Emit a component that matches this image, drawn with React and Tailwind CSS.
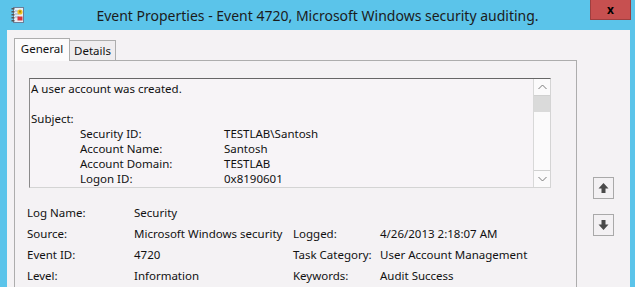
import React from "react";

const font = { fontFamily: '"Noto Sans", "Liberation Sans", sans-serif' };

function EventIcon() {
    return (
        <svg width="14" height="16" viewBox="0 0 14 16">
            <rect x="2.5" y="0.5" width="10" height="15" fill="#e8eef6" stroke="#6b7f99" />
            <line x1="4" y1="4" x2="8" y2="4" stroke="#9aabc2" />
            <line x1="4" y1="7" x2="8" y2="7" stroke="#9aabc2" />
            <line x1="4" y1="10" x2="8" y2="10" stroke="#9aabc2" />
            {[2, 5, 8, 11, 14].map((y) => (
                <rect key={y} x="0.5" y={y - 1} width="3" height="1.5" fill="#555" />
            ))}
            <circle cx="9" cy="5" r="2.6" fill="#f2c01e" />
            <rect x="8.5" y="3.6" width="1" height="2" fill="#6a4a00" />
            <rect x="6.5" y="9.5" width="5" height="4" fill="#d8343b" />
        </svg>
    );
}

function ArrowButton({ down }) {
    return (
        <div className="flex h-[22px] w-[21px] items-center justify-center border border-[#a9a9a9] bg-[#f3f1f3]">
            <svg width="11" height="12" viewBox="0 0 11 12" className={down ? "rotate-180" : ""}>
                <path d="M5.5 1 L10.5 6.5 L7.5 6.5 L7.5 11 L3.5 11 L3.5 6.5 L0.5 6.5 Z" fill="#4a4a4a" />
            </svg>
        </div>
    );
}

function Chevron({ down }) {
    return (
        <svg width="9" height="6" viewBox="0 0 9 6" className={down ? "rotate-180" : ""}>
            <path d="M0.5 5 L4.5 1 L8.5 5" fill="none" stroke="#7a7a7a" strokeWidth="1" />
        </svg>
    );
}

const subjectRows = [
    ["Security ID:", "TESTLAB\\Santosh"],
    ["Account Name:", "Santosh"],
    ["Account Domain:", "TESTLAB"],
    ["Logon ID:", "0x8190601"],
];

function FieldRow({ label, value, label2, value2 }) {
    return (
        <div className="flex h-[21px] items-center whitespace-nowrap">
            <span className="w-[107px]">{label}</span>
            <span className="w-[159px]">{value}</span>
            {label2 && <span className="w-[87px]">{label2}</span>}
            {value2 && <span>{value2}</span>}
        </div>
    );
}

export default function App() {
    return (
        <div className="flex h-[287px] w-[635px] flex-col overflow-hidden bg-[#5bc4ea] text-[#111]" style={font}>
            <div className="relative flex h-[30px] shrink-0 items-start">
                <div className="pl-[11px] pt-[7px]">
                    <EventIcon />
                </div>
                <div className="absolute left-0 right-0 top-[6px] text-center text-[14px] leading-[20px] text-[#1b1b1b]">
                    Event Properties - Event 4720, Microsoft Windows security auditing.
                </div>
                <div className="absolute right-[4px] top-0 z-10 flex h-[20px] w-[41px] items-center justify-center border border-t-0 border-[#9e3f3f] bg-[#c75050] text-[12px] font-bold leading-none text-black">
                    x
                </div>
            </div>

            <div className="ml-[7px] mr-[5px] flex flex-1 bg-[#f4f2f4] pl-[7px] pt-[8px]">
                <div className="flex w-[563px] flex-col">
                    <div className="flex h-[22px] items-end text-[11.5px]">
                        <div className="relative z-10 -mb-px flex h-[23px] w-[56px] items-center justify-center border border-b-0 border-[#adadad] bg-[#fcfbfc] pb-[2px]">
                            General
                        </div>
                        <div className="flex h-[20px] w-[46px] items-center justify-center border border-b-0 border-l-0 border-[#adadad] bg-[#efedef]">
                            Details
                        </div>
                    </div>
                    <div className="flex-1 border border-b-0 border-[#adadad] bg-[#f4f2f4] pl-[14px] pr-[25px] pt-[17px] text-[11.5px]">
                        <div className="flex h-[110px] border border-b-[#d4d4d4] border-l-[#8a8a8a] border-r-[#d4d4d4] border-t-[#666] bg-[#f7f4f7]">
                            <div className="flex-1 whitespace-nowrap pl-[1px] pt-[2px] leading-[15px]">
                                <div>A user account was created.</div>
                                <div className="h-[15px]" />
                                <div>Subject:</div>
                                {subjectRows.map(([k, v]) => (
                                    <div key={k} className="flex">
                                        <span className="w-[193px] pl-[49px]">{k}</span>
                                        <span>{v}</span>
                                    </div>
                                ))}
                            </div>
                            <div className="flex w-[17px] flex-col border-l border-[#d8d8d8] bg-[#fbfafb]">
                                <div className="flex h-[17px] items-center justify-center border-b border-[#d0d0d0]">
                                    <Chevron />
                                </div>
                                <div className="h-[16px] bg-[#dadada]" />
                                <div className="flex-1" />
                                <div className="flex h-[17px] items-center justify-center border-t border-[#d0d0d0]">
                                    <Chevron down />
                                </div>
                            </div>
                        </div>
                        <div className="-ml-[2px] pt-[14px]">
                            <FieldRow label="Log Name:" value="Security" />
                            <FieldRow label="Source:" value="Microsoft Windows security" label2="Logged:" value2="4/26/2013 2:18:07 AM" />
                            <FieldRow label="Event ID:" value="4720" label2="Task Category:" value2="User Account Management" />
                            <FieldRow label="Level:" value="Information" label2="Keywords:" value2="Audit Success" />
                        </div>
                    </div>
                </div>
                <div className="flex flex-col gap-[15px] pl-[16px] pt-[139px]">
                    <ArrowButton />
                    <ArrowButton down />
                </div>
            </div>
        </div>
    );
}
